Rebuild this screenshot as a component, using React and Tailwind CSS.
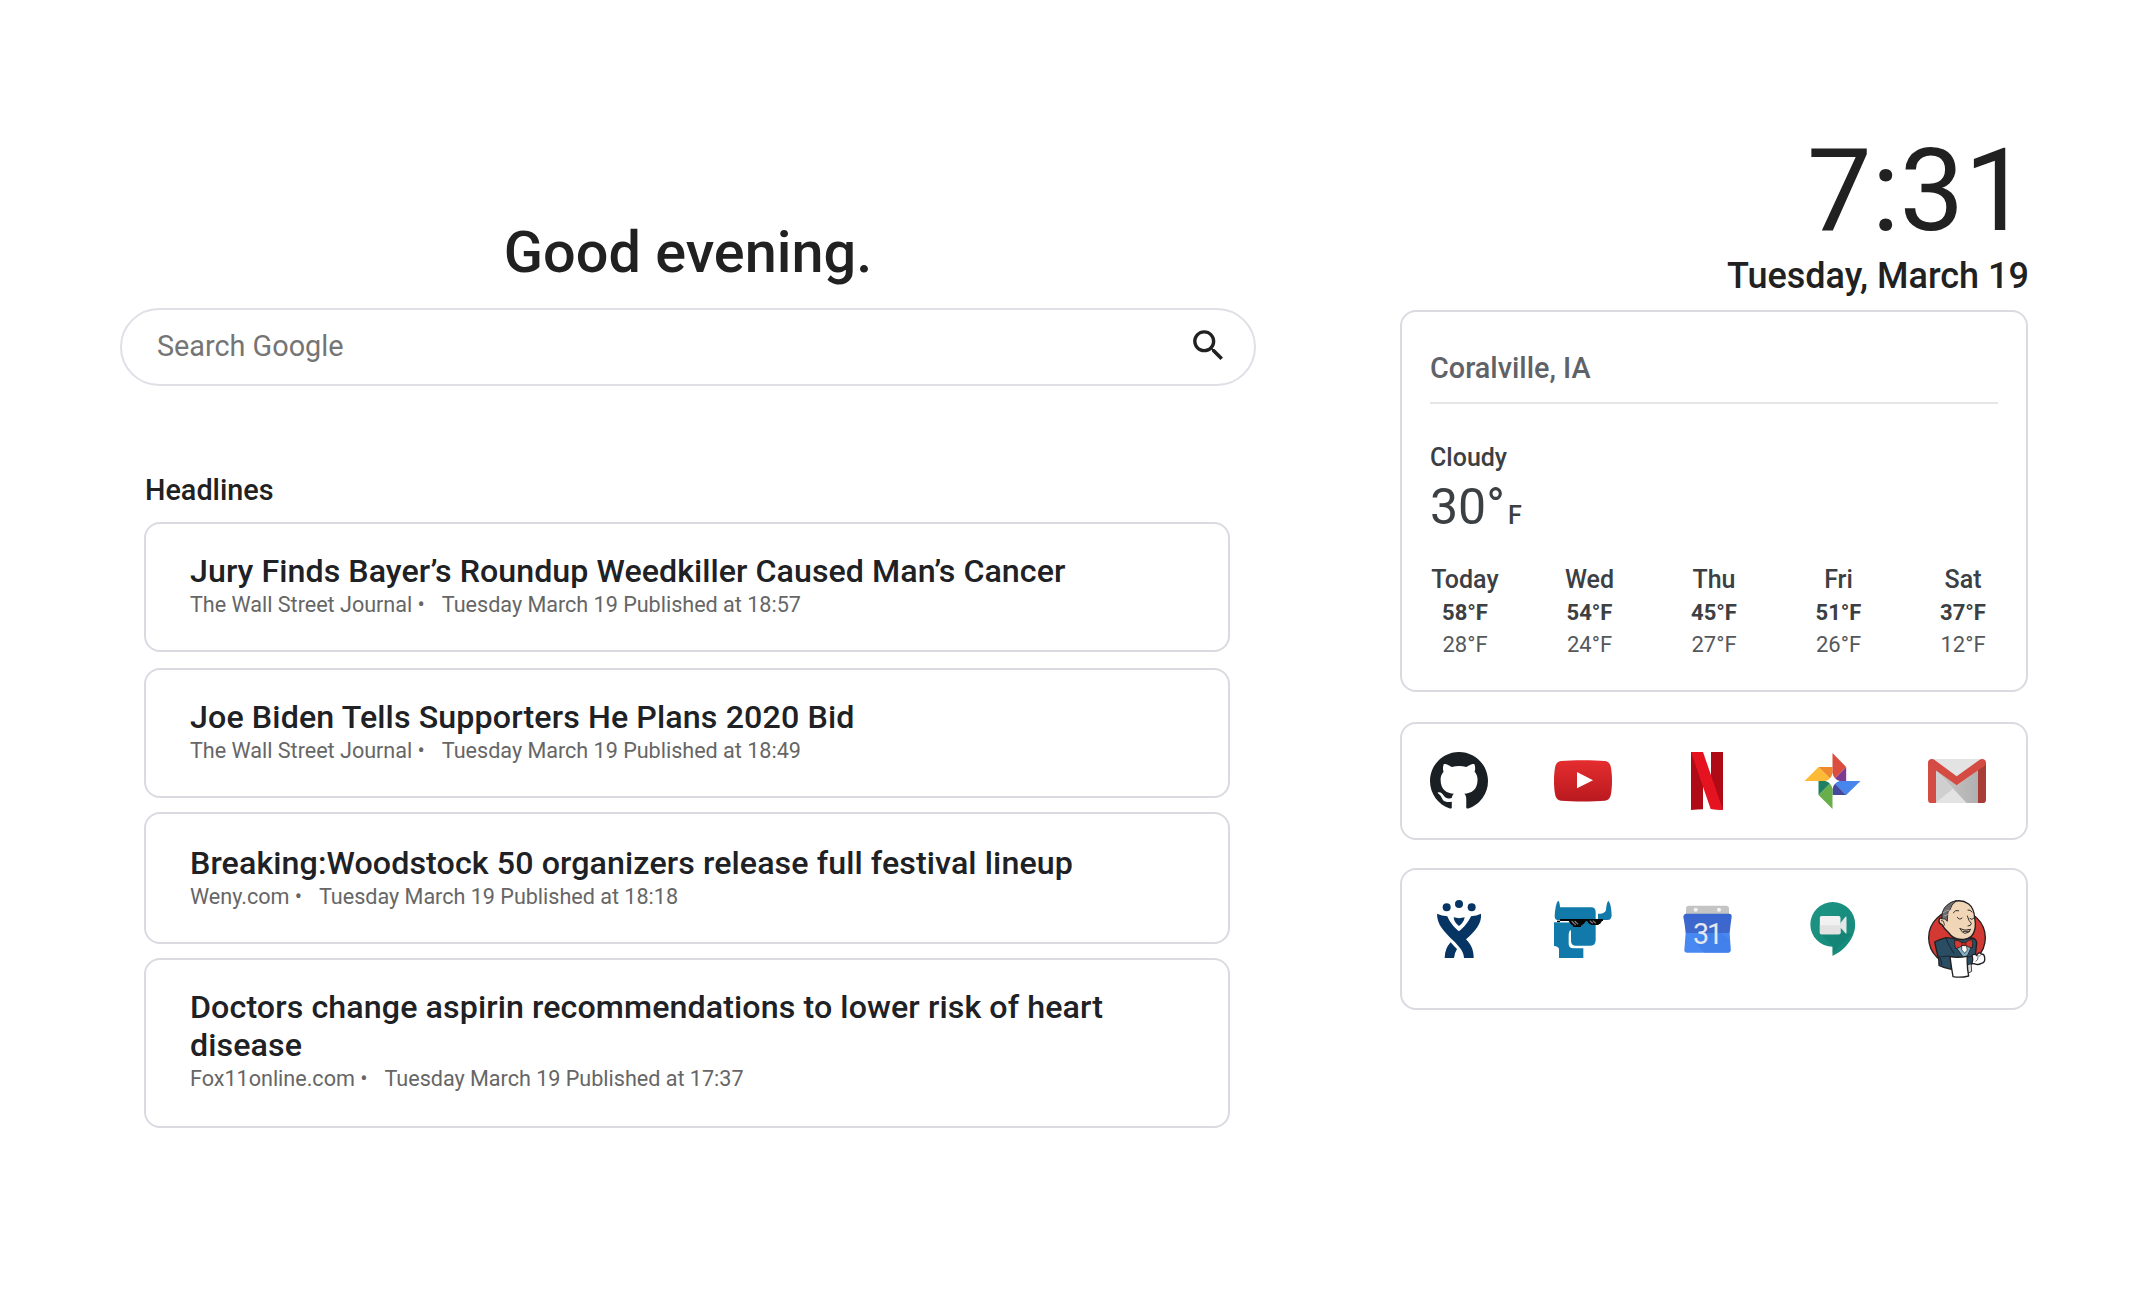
import React from 'react';

const headlines = [
  {
    title: 'Jury Finds Bayer’s Roundup Weedkiller Caused Man’s Cancer',
    source: 'The Wall Street Journal',
    time: 'Tuesday March 19 Published at 18:57',
    box: 'h-[130px] pt-7 tracking-[0.05px]',
  },
  {
    title: 'Joe Biden Tells Supporters He Plans 2020 Bid',
    source: 'The Wall Street Journal',
    time: 'Tuesday March 19 Published at 18:49',
    box: 'mt-4 h-[130px] pt-7 tracking-[0.12px]',
  },
  {
    title: 'Breaking:Woodstock 50 organizers release full festival lineup',
    source: 'Weny.com',
    time: 'Tuesday March 19 Published at 18:18',
    box: 'mt-3.5 h-[132px] pt-[30px] tracking-[0.1px]',
  },
  {
    title: 'Doctors change aspirin recommendations to lower risk of heart disease',
    source: 'Fox11online.com',
    time: 'Tuesday March 19 Published at 17:37',
    box: 'mt-3.5 h-[170px] pt-7 tracking-[0.1px]',
  },
];

const forecast = [
  { day: 'Today', high: '58°F', low: '28°F' },
  { day: 'Wed', high: '54°F', low: '24°F' },
  { day: 'Thu', high: '45°F', low: '27°F' },
  { day: 'Fri', high: '51°F', low: '26°F' },
  { day: 'Sat', high: '37°F', low: '12°F' },
];

function SearchIcon() {
  return (
    <svg viewBox="0 0 24 24" className="mb-px size-[41px] shrink-0 fill-[#212121]">
      <path d="M15.5 14h-.79l-.28-.27C15.41 12.59 16 11.11 16 9.5 16 5.91 13.09 3 9.5 3S3 5.91 3 9.5 5.91 16 9.5 16c1.61 0 3.09-.59 4.23-1.57l.27.28v.79l5 4.99L20.49 19l-4.99-5zm-6 0C7.01 14 5 11.99 5 9.5S7.01 5 9.5 5 14 7.01 14 9.5 11.99 14 9.5 14z" />
    </svg>
  );
}

function GithubIcon() {
  return (
    <svg viewBox="0 0 16 16" className="size-[58px] fill-[#191f22]">
      <path
        fillRule="evenodd"
        d="M8 0C3.58 0 0 3.58 0 8c0 3.54 2.29 6.53 5.47 7.59.4.07.55-.17.55-.38 0-.19-.01-.82-.01-1.49-2.01.37-2.53-.49-2.69-.94-.09-.23-.48-.94-.82-1.13-.28-.15-.68-.52-.01-.53.63-.01 1.08.58 1.23.82.72 1.21 1.87.87 2.33.66.07-.52.28-.87.51-1.07-1.78-.2-3.64-.89-3.64-3.95 0-.87.31-1.59.82-2.15-.08-.2-.36-1.02.08-2.12 0 0 .67-.21 2.2.82.64-.18 1.32-.27 2-.27.68 0 1.36.09 2 .27 1.53-1.04 2.2-.82 2.2-.82.44 1.1.16 1.92.08 2.12.51.56.82 1.27.82 2.15 0 3.07-1.87 3.75-3.65 3.95.29.25.54.73.54 1.48 0 1.07-.01 1.93-.01 2.2 0 .21.15.46.55.38A8.013 8.013 0 0 0 16 8c0-4.42-3.58-8-8-8z"
      />
    </svg>
  );
}

function YoutubeIcon() {
  return (
    <svg viewBox="492 111 174 174" className="mr-px -ml-px size-[58px]">
      <defs>
        <linearGradient id="yt" x1="0" y1="0" x2="0" y2="1">
          <stop offset="0" stopColor="#e52d2f" />
          <stop offset="1" stopColor="#b9191f" />
        </linearGradient>
      </defs>
      <path
        d="M579 135.500C604 135.500 628 136.500 644 138C656 139 661 147 663 158C665.500 174 666 184 666 197.500C666 211 665.500 221 663 237C661 248 656 256 644 257C628 258.500 604 259.500 579 259.500C554 259.500 530 258.500 514 257C502 256 497 248 495 237C492.500 221 492 211 492 197.500C492 184 492.500 174 495 158C497 147 502 139 514 138C530 136.500 554 135.500 579 135.500Z"
        fill="url(#yt)"
      />
      <path d="M561 171L609 196L561 220Z" fill="#fff" />
    </svg>
  );
}

function NetflixIcon() {
  return (
    <svg viewBox="867 111 174 174" className="size-[58px]">
      <path d="M903 111H939V283Q921 283 903 285Z" fill="#ae0b17" />
      <path d="M963 111H999V285Q981 283 963 282Z" fill="#ae0b17" />
      <path d="M903 111H939L999 285Q981 283 962 282Z" fill="#e51220" />
    </svg>
  );
}

function PhotosIcon() {
  return (
    <svg viewBox="280.5 111 174 174" className="size-[58px]">
      <path d="M366 156V198L324 156Z" fill="#f0882c" />
      <path d="M366 114L407 156L366 198Z" fill="#db4d3f" />
      <path d="M407 156V198H366Z" fill="#7e3c91" />
      <path d="M366 198H450L407 240Z" fill="#4885ed" />
      <path d="M407 240H366V198Z" fill="#434a9c" />
      <path d="M366 198V282L324 240Z" fill="#68ae4b" />
      <path d="M324 240V198H366Z" fill="#1f8061" />
      <path d="M366 198H282L324 156Z" fill="#fdbb35" />
      <path d="M366 174Q370 194 388 198Q370 202 366 222Q362 202 344 198Q362 194 366 174Z" fill="#fff" />
    </svg>
  );
}

function GmailIcon() {
  return (
    <svg viewBox="654 111 174 174" className="size-[58px]">
      <defs>
        <linearGradient id="gm" x1="0" x2="1">
          <stop offset="0" stopColor="#c9c9c9" />
          <stop offset="1" stopColor="#b0b0b0" />
        </linearGradient>
      </defs>
      <path d="M664 132H818L806 264H676Z" fill="#e3e3e3" />
      <path d="M676 164L728 222L676 264Z" fill="#cfcfcf" />
      <path d="M676 164L741 211L806 164V264H770Z" fill="url(#gm)" />
      <path d="M654 142L678 160V264H664Q654 264 654 254Z" fill="#d34d45" />
      <path d="M828 142L804 160V264H818Q828 264 828 254Z" fill="#a83c36" />
      <path
        d="M654 143C654 132 666 129 674 135L740 184L808 135C816 129 828 132 828 143C828 148 826 151 822 154L740 211L660 154C656 151 654 148 654 143Z"
        fill="#d34b43"
      />
    </svg>
  );
}

function JiraIcon() {
  return (
    <svg viewBox="120 120 174 174" className="size-[58px] fill-[#063564]">
      <circle cx="170" cy="142" r="12" />
      <circle cx="207" cy="132" r="12" />
      <circle cx="245" cy="142" r="12" />
      <path d="M191 172Q207 177 224 172Q222 187 207 198Q192 187 191 172Z" />
      <path d="M141 161Q155 168 172 169C178 185 192 203 207 214C222 203 236 185 243 169Q260 168 273 161C276 192 254 214 228 238C246 256 251 274 251 294H222C222 276 208 259 188 240C162 214 141 194 141 161Z" />
      <path d="M182 247Q191 258 201 267Q193 280 192 294H164Q164 266 182 247Z" />
    </svg>
  );
}

function BullIcon() {
  return (
    <svg viewBox="492 120 174 174" className="mr-px -ml-px size-[58px]">
      <g fill="#117aaa">
        <path d="M504 122Q509 122 510 142H604Q617 142 617 156V240Q617 257 602 257H558Q543 257 543 242V210Q535 212 536 232V252Q537 265 550 265H580V294H507V267Q505 259 492 258V187H536L532 181H503Q494 179 494 168Q496 132 504 122Z" />
        <path d="M655 122Q664 132 665 166Q665 180 652 180H624V161H632Q645 160 648 150Q649 130 655 122Z" />
      </g>
      <path d="M501 182H540V187H501Z" fill="#fff" />
      <path
        d="M510 177H639V183H636L630 192H626V195H602V192H598L591 183H588L581 192H578V196H573V201H549V196H545L540 189L536 183H510V187H501V182H510Z"
        fill="#050505"
      />
      <path
        d="M544 184H548V188H552V192H556V196M553 184H557V188H561V192H565M599 183H603V187H607V191M608 183H612V187H616V191"
        fill="none"
        stroke="#bbb"
        strokeWidth="2"
      />
    </svg>
  );
}

function CalendarIcon() {
  return (
    <svg viewBox="387 12 174 174" className="size-[58px]">
      <defs>
        <linearGradient id="cal" x1="0" y1="0" x2="0" y2="1">
          <stop offset="0" stopColor="#3a66d0" />
          <stop offset="1" stopColor="#3f68cb" />
        </linearGradient>
      </defs>
      <path d="M408 58V38Q408 29 417 29H529Q537 29 537 38V58Z" fill="#c4c4c4" />
      <circle cx="437" cy="41" r="6" fill="#f5f5f5" />
      <circle cx="507" cy="41" r="6" fill="#f5f5f5" />
      <path d="M407 110H539L542 163Q542 170 535 170H410Q403 170 403 163Z" fill="#4788f2" />
      <path d="M434 139L464 170H535Q541 170 542 163L540 132L512 110H470Z" fill="#3f7be6" opacity=".6" />
      <path d="M407 53H538Q546 54 545 62Q541 90 539 111H407Q405 88 400 62Q400 54 407 53Z" fill="url(#cal)" />
      <text x="474" y="143" textAnchor="middle" fontSize="86" fontWeight="400" fontFamily="Roboto, sans-serif" fill="#e4e7ee" textLength="90">
        31
      </text>
    </svg>
  );
}

function MeetIcon() {
  return (
    <svg viewBox="280.5 120 174 174" className="size-[58px]">
      <defs>
        <linearGradient id="meet" x1="0" y1="0" x2="1" y2="1">
          <stop offset="0" stopColor="#1d9484" />
          <stop offset="1" stopColor="#15887a" />
        </linearGradient>
      </defs>
      <path d="M367 126A67 67 0 0 1 434 193C434 235 402 272 366 288V260A67 67 0 1 1 367 126Z" fill="url(#meet)" />
      <path d="M330 222L366 258V280L424 222L404 218Z" fill="#0c7467" opacity=".3" />
      <rect x="328" y="168" width="62" height="55" rx="5" fill="#f1f1f1" />
      <path d="M328 196H390V218Q390 223 385 223H333Q328 223 328 218Z" fill="#e2e2e2" />
      <path d="M389 190L405 170Q408 168 408 173V218Q408 223 405 220L389 202Z" fill="#e6e6e6" />
    </svg>
  );
}

function JenkinsIcon() {
  return (
    <svg viewBox="18 18 174 234" className="h-[78px] w-[58px]" strokeLinejoin="round" strokeLinecap="round">
      <ellipse cx="105" cy="131" rx="85" ry="83" fill="#d33833" stroke="#231f20" strokeWidth="4" />
      <path d="M38 144Q52 136 72 131L100 134L150 132Q162 134 164 146L160 186L150 210L136 212V226H88Q66 222 51 214Q52 196 46 180Z" fill="#2b4d63" stroke="#231f20" strokeWidth="4" />
      <path d="M53 186L60 212M72 134Q82 160 96 178M60 188Q76 184 92 188" fill="none" stroke="#15242e" strokeWidth="3" />
      <path d="M100 156L150 154L136 186L124 188Z" fill="#81b0c4" stroke="#231f20" strokeWidth="2.500" />
      <path d="M120 152L132 152L136 168L128 178L120 168Z" fill="#fff" stroke="#231f20" strokeWidth="2" />
      <path d="M60 92Q50 88 51 80Q52 70 60 72Q64 36 92 24Q118 14 140 30Q156 42 158 72Q162 92 158 108Q152 134 126 136Q96 140 78 114Q66 104 60 92Z" fill="#f0d6b7" stroke="#231f20" strokeWidth="4" />
      <path d="M60 74Q58 52 70 38Q84 22 104 20Q86 32 84 48Q76 50 77 62L76 82Q70 72 60 74Z" fill="#6d6b6d" stroke="#231f20" strokeWidth="2.500" />
      <path d="M64 56Q72 48 84 48M66 66L77 62" fill="none" stroke="#b0aeb0" strokeWidth="2.500" />
      <path d="M58 80Q65 78 66 88Q70 96 62 96" fill="none" stroke="#231f20" strokeWidth="2.500" />
      <path d="M94 56Q100 46 110 50M138 48Q146 46 150 54M106 70Q112 80 120 72M144 74Q150 80 156 72M136 66Q140 82 148 88Q148 96 138 96M114 104Q128 112 146 106Q142 118 128 118Q120 116 114 104M124 112H142" fill="none" stroke="#231f20" strokeWidth="2.800" />
      <path d="M98 138Q110 138 120 146H130Q140 138 150 136Q154 148 151 162Q140 160 131 154H122Q112 162 101 164Q96 152 98 138Z" fill="#d33833" stroke="#231f20" strokeWidth="2.500" />
      <path d="M121 145H131V155H121Z" fill="#b92b2b" stroke="#231f20" strokeWidth="2" />
      <path d="M138 188L146 190L149 232L138 238Z" fill="#ddd" stroke="#231f20" strokeWidth="2.500" />
      <path d="M136 190L152 186V208L138 212Z" fill="#2b4d63" stroke="#231f20" strokeWidth="2.500" />
      <path d="M150 184Q158 178 164 184Q170 172 178 180Q188 180 188 192Q190 206 178 208Q168 214 160 210L150 208Q154 196 150 184Z" fill="#fff" stroke="#231f20" strokeWidth="4" />
      <path d="M164 186Q174 188 176 184M162 202Q170 196 168 190" fill="none" stroke="#231f20" strokeWidth="2" />
      <path d="M84 188Q108 192 136 187Q134 216 140 246Q116 252 93 248Q88 220 84 188Z" fill="#fff" stroke="#231f20" strokeWidth="4" />
    </svg>
  );
}

function Greeting() {
  return (
    <h1 className="mb-[21px] text-center text-[57.6px] leading-[69px] font-medium text-[#212121]">
      Good evening.
    </h1>
  );
}

function SearchBar() {
  return (
    <div className="flex h-[78px] items-center rounded-full border-2 border-[#dfe0e6] bg-white pr-[25px] pb-0.5 pl-[35px]">
      <input
        type="text"
        placeholder="Search Google"
        className="h-[34px] min-w-0 flex-1 bg-transparent text-[28.8px] leading-[34px] text-[#212121] outline-none placeholder:text-[#757575]"
      />
      <SearchIcon />
    </div>
  );
}

function Headline({ item }) {
  return (
    <article className={`${item.box} rounded-2xl border-2 border-[#dadbe1] px-11`}>
      <h3 className="text-[32.2px] leading-[38px] font-medium text-[#202124]">{item.title}</h3>
      <p className="mt-px flex text-[21.6px] leading-[27px] tracking-[-0.02px] text-[#666]">
        <span>{item.source}&nbsp;•</span>
        <span className="ml-[17px]">{item.time}</span>
      </p>
    </article>
  );
}

function Weather() {
  return (
    <section className="mt-[13px] h-[382px] rounded-2xl border-2 border-[#dadbe1] px-7 pt-[39px] text-[#3c4043]">
      <div className="border-b-2 border-[#e6e6e6] pb-[17px] text-[28.8px] leading-[34px] font-medium text-[#5f6368]">
        Coralville, IA
      </div>
      <div className="mt-[39px] text-[25px] leading-[29px] font-medium">Cloudy</div>
      <div className="mt-1.5 flex h-[58px] items-baseline text-[50px] leading-[58px]">
        <span>30°</span>
        <span className="ml-[3px] text-[25px] leading-8 font-medium">F</span>
      </div>
      <div className="mt-[29px] flex justify-between">
        {forecast.map((f) => (
          <div key={f.day} className="flex w-[70px] flex-col items-center">
            <span className="text-[25px] leading-[29px] font-medium">{f.day}</span>
            <span className="mt-[3px] text-[22px] leading-[31px] font-bold">{f.high}</span>
            <span className="mt-px text-[22px] leading-[31px] text-[#55585b]">{f.low}</span>
          </div>
        ))}
      </div>
    </section>
  );
}

export default function App() {
  return (
    <main className="flex h-[1290px] w-[2154px] overflow-hidden bg-white font-[Roboto,sans-serif]">
      <div className="ml-[120px] w-[1136px] pt-[218px]">
        <Greeting />
        <SearchBar />
        <section className="mt-[87px] mr-[26px] ml-6">
          <h2 className="mb-[15px] pl-px text-[28.8px] leading-[34px] font-medium text-[#212121]">Headlines</h2>
          {headlines.map((item) => (
            <Headline key={item.title} item={item} />
          ))}
        </section>
      </div>

      <aside className="ml-36 w-[628px] pt-[127px]">
        <div className="-mr-px flex flex-col items-end text-[#212121]">
          <div className="text-[115.2px] leading-[127px]">7:31</div>
          <div className="mt-px text-4xl leading-[42px] font-medium">Tuesday, March 19</div>
        </div>
        <Weather />
        <nav className="mt-[30px] flex h-[118px] items-start justify-between rounded-2xl border-2 border-[#dadbe1] py-7 pr-10 pl-7">
          <GithubIcon />
          <YoutubeIcon />
          <NetflixIcon />
          <PhotosIcon />
          <GmailIcon />
        </nav>
        <nav className="mt-7 flex h-[142px] items-start justify-between rounded-2xl border-2 border-[#dadbe1] py-[30px] pr-10 pl-7">
          <JiraIcon />
          <BullIcon />
          <CalendarIcon />
          <MeetIcon />
          <JenkinsIcon />
        </nav>
      </aside>
    </main>
  );
}
